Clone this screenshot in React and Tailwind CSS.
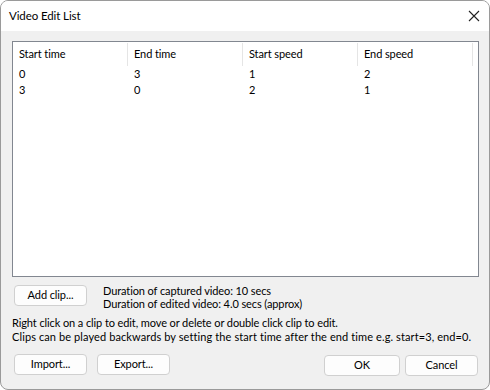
export default function App() {
  const cols = ["Start time", "End time", "Start speed", "End speed"];
  const rows = [
    ["0", "3", "1", "2"],
    ["3", "0", "2", "1"],
  ];
  const btn =
    "h-[21px] rounded-[4px] border border-[#d0d0d0] bg-[#fdfdfd] text-[11px] text-black flex items-center justify-center";
  return (
    <div
      className="w-[490px] h-[390px] bg-[#f0f0f0] border border-[#9a9a9a] rounded-[8px] overflow-hidden flex flex-col text-black whitespace-nowrap tracking-[-0.1px]"
      style={{ fontFamily: 'Lato, "Noto Sans", sans-serif' }}
    >
      <div className="h-[30px] bg-white flex items-center justify-between pl-[8px] pr-[9px] shrink-0">
        <span className="text-[11.5px]">Video Edit List</span>
        <svg width="12" height="12" viewBox="0 0 12 12">
          <path d="M1 1 L11 11 M11 1 L1 11" stroke="#222" strokeWidth="1.1" fill="none" />
        </svg>
      </div>
      <div className="flex-1 flex flex-col px-[11px] pt-[10px]">
        <div className="w-[467px] h-[236px] bg-white border border-[#828790] flex flex-col">
          <div className="flex h-[24px] pt-[1px] shrink-0">
            {cols.map((c) => (
              <div key={c} className="w-[115px] flex items-center pl-[6px] border-r border-[#e5e5e5] text-[11px]">
                {c}
              </div>
            ))}
          </div>
          {rows.map((r, i) => (
            <div key={i} className="flex h-[16px]">
              {r.map((v, j) => (
                <div key={j} className="w-[115px] flex items-center pl-[6px] text-[11px]">
                  {v}
                </div>
              ))}
            </div>
          ))}
        </div>
        <div className="flex items-start mt-[8px] h-[30px]">
          <button className={btn + " w-[73px] ml-[2px]"}>Add clip...</button>
          <div className="ml-[16px] text-[11px] leading-[13px] -mt-[1px]">
            <div>Duration of captured video: 10 secs</div>
            <div>Duration of edited video: 4.0 secs (approx)</div>
          </div>
        </div>
        <div className="text-[11px] leading-[14px] h-[39px] pt-[1px]">
          <div>Right click on a clip to edit, move or delete or double click clip to edit.</div>
          <div className="tracking-[0.1px]">Clips can be played backwards by setting the start time after the end time e.g. start=3, end=0.</div>
        </div>
        <div className="flex items-start">
          <button className={btn + " w-[73px] ml-[2px]"}>Import...</button>
          <button className={btn + " w-[73px] ml-[10px]"}>Export...</button>
          <div className="flex-1" />
          <button className={btn + " w-[76px] mt-[1px]"}>OK</button>
          <button className={btn + " w-[73px] ml-[5px] mt-[1px]"}>Cancel</button>
        </div>
      </div>
    </div>
  );
}
